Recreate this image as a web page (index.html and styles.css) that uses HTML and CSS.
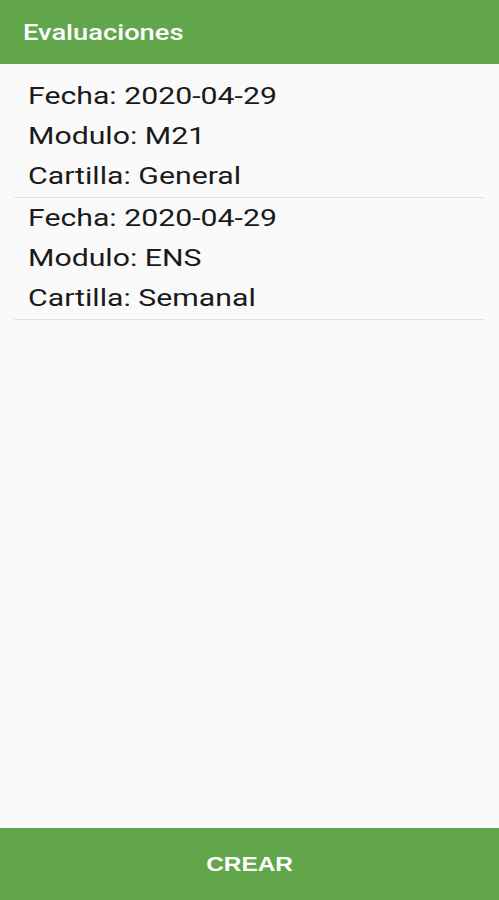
FILE: index.html
```html
<!DOCTYPE html>
<html lang="es">
<head>
  <meta charset="UTF-8" />
  <meta name="viewport" content="width=device-width, initial-scale=1.0"/>
  <title>Evaluaciones</title>
  <link rel="stylesheet" href="styles.css">
</head>
<body>
  <div class="screen">
    <header class="toolbar"><span class="wide">Evaluaciones</span></header>

    <ul class="list">
      <li class="item">
        <p><span>Fecha: 2020-04-29</span></p>
        <p><span>Modulo: M21</span></p>
        <p><span>Cartilla: General</span></p>
      </li>
      <li class="item">
        <p><span>Fecha: 2020-04-29</span></p>
        <p><span>Modulo: ENS</span></p>
        <p><span>Cartilla: Semanal</span></p>
      </li>
    </ul>

    <button type="button" class="create"><span class="wide-btn">CREAR</span></button>
  </div>
</body>
</html>
```

FILE: styles.css
```css
body {
  margin: 0;
  font-family: Roboto, "Liberation Sans", Arial, sans-serif;
  background: #fafafa;
}

.screen {
  display: flex;
  flex-direction: column;
  height: 900px;
  overflow: hidden;
}

.toolbar {
  height: 64px;
  background: #62a64c;
  color: #fff;
  font-size: 22px;
  font-weight: 500;
  padding-left: 23px;
  display: flex;
  align-items: center;
  box-sizing: border-box;
}

.wide {
  display: inline-block;
  transform: scaleX(1.24);
  transform-origin: left center;
}

.list {
  flex: 1;
  list-style: none;
  margin: 0;
  padding: 12px 14px 0;
}

.item {
  border-bottom: 1px solid #e2e2e2;
  padding-left: 14px;
  padding-bottom: 1px;
}

.item p {
  margin: 0;
  height: 40px;
  line-height: 40px;
  font-size: 24px;
  color: #1a1a1a;
}

.item span {
  display: inline-block;
  transform: scaleX(1.26);
  transform-origin: left center;
}

.create {
  height: 72px;
  border: none;
  background: #62a64c;
  color: #fff;
  font-family: "Liberation Sans", Arial, sans-serif;
  font-weight: bold;
  font-size: 20px;
  width: 100%;
  padding: 0;
}

.wide-btn {
  display: inline-block;
  transform: scaleX(1.22);
}
```
